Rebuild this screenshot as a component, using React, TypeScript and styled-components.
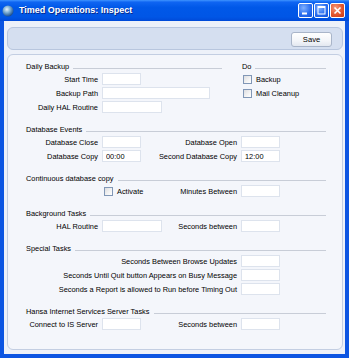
import React from 'react';
import styled, { createGlobalStyle } from 'styled-components';

const GlobalStyle = createGlobalStyle`
  html, body {
    margin: 0;
    padding: 0;
    background: #ffffff;
  }
  body {
    font-family: "Liberation Sans", Arial, sans-serif;
    color: #000;
  }
`;

const Window = styled.div`
  width: 349px;
  height: 358px;
  display: flex;
  flex-direction: column;
  background: #0c55e2;
  overflow: hidden;
`;

const TitleBar = styled.div`
  height: 21px;
  flex: 0 0 21px;
  display: flex;
  align-items: center;
  padding: 0 4px 0 2px;
  box-sizing: border-box;
  background: linear-gradient(
    180deg,
    #3f94ff 0%,
    #0f65f2 10%,
    #0058e8 35%,
    #0056e6 80%,
    #004ad8 100%
  );
`;

const Title = styled.span`
  margin-left: 5px;
  flex: 1;
  color: #ffffff;
  font-weight: bold;
  font-size: 9px;
  line-height: 21px;
  white-space: nowrap;
  text-shadow: 1px 1px 0 #0a2a8a;
`;

const Controls = styled.div`
  display: flex;
  gap: 1px;
`;

const CtrlButton = styled.div<{ $close?: boolean }>`
  width: 15px;
  height: 15px;
  box-sizing: border-box;
  border: 1px solid #ffffff;
  border-radius: 2px;
  display: flex;
  align-items: center;
  justify-content: center;
  background: ${(p) =>
    p.$close
      ? 'radial-gradient(circle at 35% 30%, #f49a7c 0%, #e2562e 55%, #c63a16 100%)'
      : 'radial-gradient(circle at 35% 30%, #7fb0ff 0%, #2a6ef0 55%, #1150d8 100%)'};
`;

const Client = styled.div`
  flex: 1;
  margin: 0 4px 4px;
  background: #edf1f9;
  padding: 6px 2px 4px 3px;
  display: flex;
  flex-direction: column;
  gap: 4px;
`;

const Toolbar = styled.div`
  height: 23px;
  flex: 0 0 23px;
  box-sizing: border-box;
  border: 1px solid #b8c6de;
  border-radius: 6px;
  background: #d5dff0;
  display: flex;
  justify-content: flex-end;
  align-items: center;
  padding: 2px 10px 0 0;
`;

const SaveButton = styled.button`
  width: 41px;
  height: 15px;
  box-sizing: border-box;
  padding: 0;
  border: 1px solid #a9b5c9;
  border-radius: 3px;
  background: linear-gradient(180deg, #ffffff 0%, #f3f5f9 60%, #e3e8f0 100%);
  font-family: "Liberation Sans", Arial, sans-serif;
  font-size: 7.6px;
  color: #000;
`;

const Panel = styled.div`
  flex: 1;
  box-sizing: border-box;
  border: 1px solid #c3cee2;
  border-radius: 6px;
  background: #f4f6fb;
  padding: 7px 16px 0 18px;
  display: flex;
  flex-direction: column;
  gap: 12px;
`;

const Split = styled.div`
  display: flex;
  gap: 20px;
`;

const Section = styled.div<{ $width?: number }>`
  display: flex;
  flex-direction: column;
  gap: 2px;
  ${(p) => (p.$width ? `flex: 0 0 ${p.$width}px;` : '')}
`;

const Header = styled.div`
  height: 9px;
  display: flex;
  align-items: center;
  gap: 4px;
  font-size: 7.4px;
  line-height: 9px;
  color: #000;
  white-space: nowrap;
`;

const Rule = styled.div`
  flex: 1;
  height: 1px;
  margin-top: 3px;
  background: #c8cdd7;
`;

const Row = styled.div<{ $simple?: boolean }>`
  display: grid;
  grid-template-columns: ${(p) => (p.$simple ? '72px 1fr' : '72px 1fr auto 40px')};
  column-gap: 4px;
  width: ${(p) => (p.$simple ? '100%' : '255px')};
  height: 12px;
  align-items: center;
`;

const Label = styled.span<{ $span?: boolean }>`
  justify-self: end;
  white-space: nowrap;
  font-size: 7.4px;
  line-height: 9px;
  color: #000;
  ${(p) => (p.$span ? 'grid-column: 1 / 4;' : '')}
`;

const Field = styled.input<{ $w: number }>`
  width: ${(p) => p.$w}px;
  height: 12px;
  box-sizing: border-box;
  border: 1px solid #dde3ed;
  background: #ffffff;
  padding: 0 0 0 3px;
  margin: 0;
  font-family: "Liberation Sans", Arial, sans-serif;
  font-size: 7.4px;
  color: #000;
  outline: none;
`;

const Check = styled.label<{ $indent?: number }>`
  display: flex;
  align-items: center;
  gap: 4px;
  height: 12px;
  margin-left: ${(p) => p.$indent ?? 0}px;
  font-size: 7.4px;
  line-height: 9px;
  color: #000;
  white-space: nowrap;
`;

const Box = styled.span`
  width: 9px;
  height: 9px;
  box-sizing: border-box;
  border: 1px solid #8197b6;
  background: linear-gradient(135deg, #dcdde0 0%, #f4f4f4 60%, #ffffff 100%);
`;

const Empty = styled.span``;

const S = 39;
const M = 60;
const L = 108;

export default function App() {
  return (
    <>
      <GlobalStyle />
      <Window>
        <TitleBar>
          <svg width="12" height="12" viewBox="0 0 12 12">
            <defs>
              <radialGradient id="ball" cx="40%" cy="35%" r="65%">
                <stop offset="0%" stopColor="#e6f2fa" />
                <stop offset="45%" stopColor="#7fb1d6" />
                <stop offset="100%" stopColor="#1d4f8f" />
              </radialGradient>
            </defs>
            <circle cx="6" cy="6" r="5.5" fill="url(#ball)" />
          </svg>
          <Title>Timed Operations: Inspect</Title>
          <Controls>
            <CtrlButton>
              <svg width="13" height="13" viewBox="0 0 13 13">
                <rect x="3" y="8.5" width="5" height="2" fill="#fff" />
              </svg>
            </CtrlButton>
            <CtrlButton>
              <svg width="13" height="13" viewBox="0 0 13 13">
                <rect x="3" y="2.5" width="7" height="7.5" fill="none" stroke="#fff" strokeWidth="1" />
                <rect x="3" y="2.5" width="7" height="1.5" fill="#fff" />
              </svg>
            </CtrlButton>
            <CtrlButton $close>
              <svg width="13" height="13" viewBox="0 0 13 13">
                <path d="M3.5 3.5 L9.5 9.5 M9.5 3.5 L3.5 9.5" stroke="#fff" strokeWidth="1.6" />
              </svg>
            </CtrlButton>
          </Controls>
        </TitleBar>
        <Client>
          <Toolbar>
            <SaveButton>Save</SaveButton>
          </Toolbar>
          <Panel>
            <Split>
              <Section $width={196}>
                <Header>
                  Daily Backup
                  <Rule />
                </Header>
                <Row $simple>
                  <Label>Start Time</Label>
                  <Field $w={S} readOnly />
                </Row>
                <Row $simple>
                  <Label>Backup Path</Label>
                  <Field $w={L} readOnly />
                </Row>
                <Row $simple>
                  <Label>Daily HAL Routine</Label>
                  <Field $w={M} readOnly />
                </Row>
              </Section>
              <Section $width={84}>
                <Header>
                  Do
                  <Rule />
                </Header>
                <Check $indent={1}>
                  <Box />
                  Backup
                </Check>
                <Check $indent={1}>
                  <Box />
                  Mail Cleanup
                </Check>
              </Section>
            </Split>

            <Section>
              <Header>
                Database Events
                <Rule />
              </Header>
              <Row>
                <Label>Database Close</Label>
                <Field $w={S} readOnly />
                <Label>Database Open</Label>
                <Field $w={S} readOnly />
              </Row>
              <Row>
                <Label>Database Copy</Label>
                <Field $w={S} readOnly value="00:00" />
                <Label>Second Database Copy</Label>
                <Field $w={S} readOnly value="12:00" />
              </Row>
            </Section>

            <Section>
              <Header>
                Continuous database copy
                <Rule />
              </Header>
              <Row>
                <Empty />
                <Check $indent={2}>
                  <Box />
                  Activate
                </Check>
                <Label>Minutes Between</Label>
                <Field $w={S} readOnly />
              </Row>
            </Section>

            <Section>
              <Header>
                Background Tasks
                <Rule />
              </Header>
              <Row>
                <Label>HAL Routine</Label>
                <Field $w={M} readOnly />
                <Label>Seconds between</Label>
                <Field $w={S} readOnly />
              </Row>
            </Section>

            <Section>
              <Header>
                Special Tasks
                <Rule />
              </Header>
              <Row>
                <Label $span>Seconds Between Browse Updates</Label>
                <Field $w={S} readOnly />
              </Row>
              <Row>
                <Label $span>Seconds Until Quit button Appears on Busy Message</Label>
                <Field $w={S} readOnly />
              </Row>
              <Row>
                <Label $span>Seconds a Report is allowed to Run before Timing Out</Label>
                <Field $w={S} readOnly />
              </Row>
            </Section>

            <Section>
              <Header>
                Hansa Internet Services Server Tasks
                <Rule />
              </Header>
              <Row>
                <Label>Connect to IS Server</Label>
                <Field $w={S} readOnly />
                <Label>Seconds between</Label>
                <Field $w={S} readOnly />
              </Row>
            </Section>
          </Panel>
        </Client>
      </Window>
    </>
  );
}
